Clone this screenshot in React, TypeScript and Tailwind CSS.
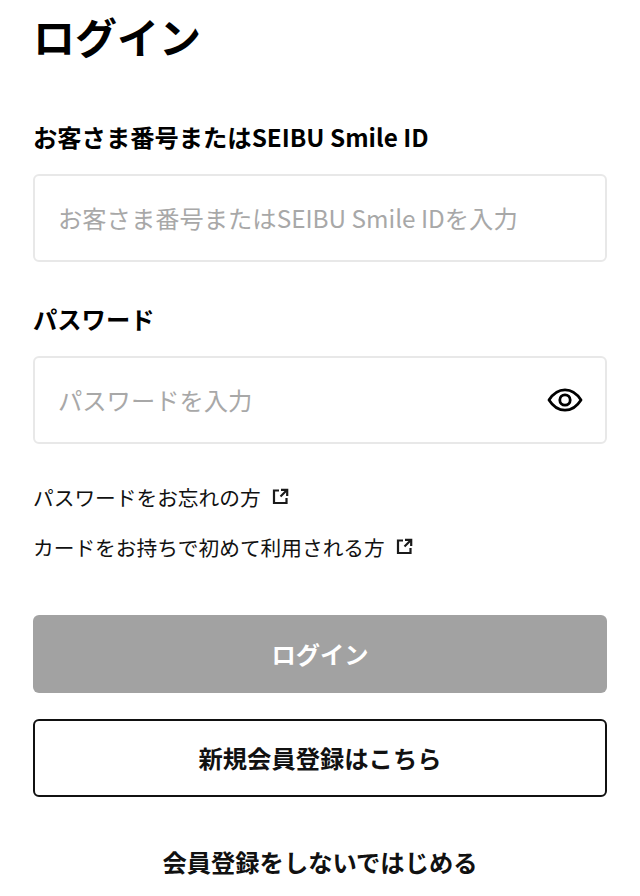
import { useState } from 'react';

function ExternalIcon() {
  return (
    <svg width="17" height="17" viewBox="0 0 17 17" fill="none" stroke="#1a1a1a" strokeWidth="2.2" className="shrink-0 -translate-y-[1px]">
      <path d="M7 2.5H2V15h12.5v-5" />
      <path d="M9 1.8h6.2V8" />
      <path d="M15 2L8.5 8.5" />
    </svg>
  );
}

function EyeIcon() {
  return (
    <svg width="36" height="26" viewBox="0 0 36 26" fill="none" stroke="#000" strokeWidth="2.8" className="shrink-0">
      <path d="M2 13C6.4 6 11.6 2.8 18 2.8S29.6 6 34 13C29.6 20 24.4 23.2 18 23.2S6.4 20 2 13Z" strokeLinejoin="round" />
      <circle cx="18" cy="13" r="5.2" />
    </svg>
  );
}

export default function App() {
  const [customerId, setCustomerId] = useState('');
  const [password, setPassword] = useState('');

  return (
    <div className="h-[896px] overflow-hidden bg-white px-[33px] text-[#111] font-['Noto_Sans_CJK_JP','Noto_Sans',sans-serif]">
      <h1 className="pt-[6px] text-[42px] leading-[60px] font-bold text-black">ログイン</h1>

      <label className="mt-[55px] block text-[24.3px] leading-[32px] font-bold text-black">
        お客さま番号またはSEIBU Smile ID
      </label>
      <div className="mt-[21px] flex h-[88px] items-center rounded-md border-2 border-[#e8e8e8] px-[23px]">
        <input
          type="text"
          value={customerId}
          onChange={e => setCustomerId(e.target.value)}
          placeholder="お客さま番号またはSEIBU Smile IDを入力"
          className="w-full bg-transparent text-[24.3px] outline-none placeholder:text-[#a8a8a8]"
        />
      </div>

      <label className="mt-[41px] block text-[24.3px] leading-[32px] font-bold text-black">パスワード</label>
      <div className="mt-[21px] flex h-[88px] items-center rounded-md border-2 border-[#e8e8e8] pl-[23px] pr-[22px]">
        <input
          type="password"
          value={password}
          onChange={e => setPassword(e.target.value)}
          placeholder="パスワードを入力"
          className="w-full bg-transparent text-[24.3px] outline-none placeholder:text-[#a8a8a8]"
        />
        <EyeIcon />
      </div>

      <div className="mt-[38px] flex items-center gap-[11px] text-[20.7px] leading-[30px]">
        <span>パスワードをお忘れの方</span>
        <ExternalIcon />
      </div>
      <div className="mt-[20px] flex items-center gap-[11px] text-[20.7px] leading-[30px]">
        <span>カードをお持ちで初めて利用される方</span>
        <ExternalIcon />
      </div>

      <button className="mt-[53px] block h-[78px] w-full rounded-md bg-[#a2a2a2] text-[24.3px] font-bold text-white">
        ログイン
      </button>
      <button className="mt-[26px] block h-[78px] w-full rounded-md border-2 border-[#111] bg-white text-[24.3px] font-bold">
        新規会員登録はこちら
      </button>
      <button className="mt-[47px] block w-full text-center text-[24.3px] leading-[36px] font-bold">
        会員登録をしないではじめる
      </button>
    </div>
  );
}
